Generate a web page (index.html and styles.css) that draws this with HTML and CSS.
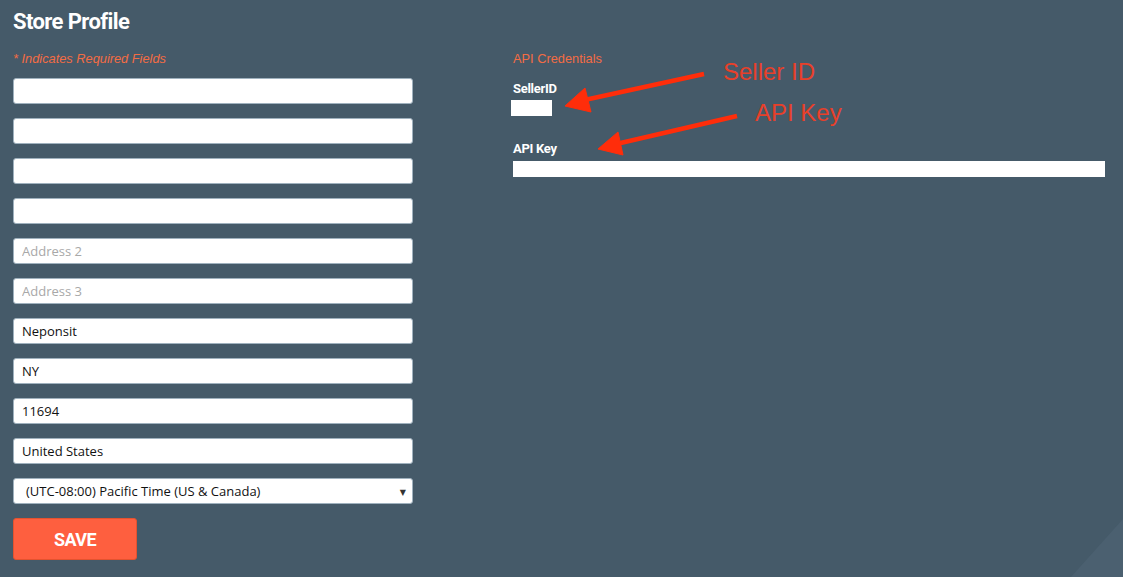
FILE: index.html
```html
<!DOCTYPE html>
<html>
<head>
<meta charset="utf-8">
<link rel="stylesheet" href="styles.css">
</head>
<body>
<div class="page">
  <h1 class="title">Store Profile</h1>
  <div class="columns">
    <form class="left">
      <p class="note">* Indicates Required Fields</p>
      <input class="field" type="text">
      <input class="field" type="text">
      <input class="field" type="text">
      <input class="field" type="text">
      <input class="field" type="text" placeholder="Address 2">
      <input class="field" type="text" placeholder="Address 3">
      <input class="field" type="text" value="Neponsit">
      <input class="field" type="text" value="NY">
      <input class="field" type="text" value="11694">
      <input class="field" type="text" value="United States">
      <div class="field select">
        <span>(UTC-08:00) Pacific Time (US &amp; Canada)</span>
        <span class="caret">&#9660;</span>
      </div>
      <button class="save" type="button">SAVE</button>
    </form>
    <div class="right">
      <p class="note plain">API Credentials</p>
      <label class="lbl">SellerID</label>
      <div class="seller-box"></div>
      <label class="lbl key">API Key</label>
      <div class="key-bar"></div>
    </div>
  </div>
  <div class="corner"></div>
  <svg class="annot" width="1123" height="577" viewBox="0 0 1123 577">
    <g fill="#ff2d0a" stroke="#ff2d0a">
      <line x1="704" y1="74" x2="580" y2="101" stroke-width="4.5"/>
      <polygon points="565,106 585,88 591,112" stroke-width="1"/>
      <line x1="737" y1="116" x2="612" y2="145" stroke-width="4.5"/>
      <polygon points="598,149 618,132 623,155" stroke-width="1"/>
    </g>
    <text x="723" y="80" class="annot-text">Seller ID</text>
    <text x="755" y="121" class="annot-text">API Key</text>
  </svg>
</div>
</body>
</html>
```
FILE: styles.css
```css
html, body {
  margin: 0;
  padding: 0;
  background: #455a69;
  height: 100%;
}
.page {
  position: relative;
  width: 1123px;
  height: 577px;
  overflow: hidden;
  padding: 8px 13px 0 13px;
  box-sizing: border-box;
  font-family: "Open Sans", "DejaVu Sans", sans-serif;
}
.title {
  margin: 0;
  font-family: "Roboto", sans-serif;
  font-weight: 700;
  font-size: 22px;
  line-height: 28px;
  color: #ffffff;
  letter-spacing: -0.6px;
}
.columns {
  display: flex;
  gap: 100px;
  margin-top: 16px;
}
.left {
  width: 400px;
  display: flex;
  flex-direction: column;
  margin: 0;
}
.note {
  margin: 0 0 12px 0;
  font-family: "Liberation Sans", Arial, sans-serif;
  font-style: italic;
  font-size: 12.8px;
  line-height: 14px;
  color: #f36c44;
}
.note.plain {
  font-style: normal;
}
.field {
  box-sizing: border-box;
  width: 400px;
  height: 26px;
  margin: 0 0 14px 0;
  padding: 0 8px;
  border: 1px solid #9fb1be;
  border-radius: 3px;
  background: #ffffff;
  font-family: "Open Sans", "DejaVu Sans", sans-serif;
  font-size: 13px;
  color: #111111;
  outline: none;
}
.field::placeholder {
  color: #a8a8a8;
}
.select {
  display: flex;
  align-items: center;
  justify-content: space-between;
  padding: 0 6px 0 12px;
  margin-bottom: 14px;
}
.caret {
  font-size: 8px;
  color: #333;
}
.save {
  width: 124px;
  height: 42px;
  border: 1px solid #e4522f;
  border-radius: 3px;
  background: #fe5f3f;
  color: #ffffff;
  font-family: "Roboto", sans-serif;
  font-weight: 700;
  font-size: 18px;
  letter-spacing: -0.6px;
  padding: 0;
  cursor: pointer;
}
.right {
  flex: 1;
  display: flex;
  flex-direction: column;
  align-items: flex-start;
  padding-right: 5px;
}
.lbl {
  font-family: "Roboto", sans-serif;
  font-weight: 700;
  font-size: 13px;
  line-height: 16px;
  color: #ffffff;
  margin-top: 3px;
  letter-spacing: -0.3px;
}
.lbl.key {
  margin-top: 25px;
}
.seller-box {
  width: 41px;
  height: 16px;
  background: #ffffff;
  margin-left: -2px;
  margin-top: 3px;
}
.key-bar {
  align-self: stretch;
  height: 16px;
  background: #ffffff;
  margin-top: 4px;
}
.corner {
  position: absolute;
  right: 0;
  bottom: 0;
  width: 52px;
  height: 58px;
  background: #4b6070;
  clip-path: polygon(100% 0, 100% 100%, 0 100%);
}
.annot {
  position: absolute;
  left: 0;
  top: 0;
  pointer-events: none;
}
.annot-text {
  font-family: "Liberation Sans", Arial, sans-serif;
  font-size: 24px;
  fill: #e8402a;
}
```
